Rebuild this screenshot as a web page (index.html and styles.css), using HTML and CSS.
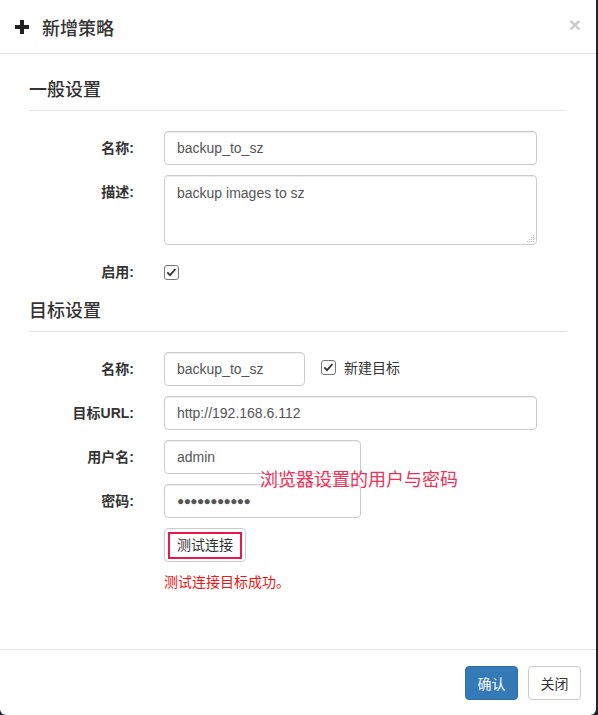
FILE: index.html
```html
<!DOCTYPE html>
<html>
<head>
    <title>新增策略</title>
    <link rel="stylesheet" href="styles.css">
</head>
<body>
    <div class="modal">
        <div class="modal-header">
            <h4 class="modal-title">
                <svg class="plus" width="16" height="16" viewBox="0 0 16 16"><path d="M8 1v14M1 8h14" stroke="#222" stroke-width="4"/></svg>
                新增策略
            </h4>
            <span class="close">&times;</span>
        </div>

        <div class="modal-body">
            <h3 class="section">一般设置</h3>
            <div class="form-row">
                <label>名称:</label>
                <div class="field"><div class="input">backup_to_sz</div></div>
            </div>
            <div class="form-row">
                <label>描述:</label>
                <div class="field">
                    <div class="input textarea">backup images to sz
                        <svg class="grip" width="8" height="8" viewBox="0 0 8 8"><g fill="#bbb"><rect x="6" y="0" width="1" height="1"/><rect x="4" y="2" width="1" height="1"/><rect x="6" y="2" width="1" height="1"/><rect x="2" y="4" width="1" height="1"/><rect x="4" y="4" width="1" height="1"/><rect x="6" y="4" width="1" height="1"/><rect x="0" y="6" width="1" height="1"/><rect x="2" y="6" width="1" height="1"/><rect x="4" y="6" width="1" height="1"/><rect x="6" y="6" width="1" height="1"/></g></svg>
                    </div>
                </div>
            </div>
            <div class="form-row">
                <label>启用:</label>
                <div class="field check-field">
                    <svg class="checkbox" width="15" height="15" viewBox="0 0 15 15"><rect x="0.5" y="0.5" width="14" height="14" rx="2.5" fill="#fff" stroke="#777"/><path d="M3.3 7.4l2.7 2.8 5.5-6.2" fill="none" stroke="#333" stroke-width="1.8"/></svg>
                </div>
            </div>

            <h3 class="section section-second">目标设置</h3>
            <div class="form-row">
                <label>名称:</label>
                <div class="field inline">
                    <div class="input short">backup_to_sz</div>
                    <span class="check-label">
                        <svg class="checkbox" width="15" height="15" viewBox="0 0 15 15"><rect x="0.5" y="0.5" width="14" height="14" rx="2.5" fill="#fff" stroke="#777"/><path d="M3.3 7.4l2.7 2.8 5.5-6.2" fill="none" stroke="#333" stroke-width="1.8"/></svg>
                        新建目标
                    </span>
                </div>
            </div>
            <div class="form-row">
                <label>目标URL:</label>
                <div class="field"><div class="input">http://192.168.6.112</div></div>
            </div>
            <div class="form-row">
                <label>用户名:</label>
                <div class="field"><div class="input medium">admin</div></div>
            </div>
            <div class="form-row">
                <label>密码:</label>
                <div class="field"><div class="input medium dots">●●●●●●●●●●●</div></div>
            </div>
            <div class="form-row">
                <label></label>
                <div class="field"><button class="btn test-btn"><span>测试连接</span></button></div>
            </div>
            <div class="form-row result-row">
                <label></label>
                <div class="field"><span class="success">测试连接目标成功。</span></div>
            </div>

            <div class="annotation">浏览器设置的用户与密码</div>
        </div>

        <div class="modal-footer">
            <button class="btn btn-primary">确认</button>
            <button class="btn">关闭</button>
        </div>
    </div>
</body>
</html>
```

FILE: styles.css
```css
html, body {
    margin: 0;
    height: 100%;
}
body {
    background: #1c262c;
    font-family: "Liberation Sans", "Noto Sans CJK SC", sans-serif;
    font-size: 14px;
    color: #333;
}
.modal {
    width: 596px;
    height: 715px;
    background: #fff;
    border-radius: 0 0 6px 6px;
    display: flex;
    flex-direction: column;
}
.modal-header {
    height: 53px;
    border-bottom: 1px solid #e5e5e5;
    display: flex;
    align-items: center;
    justify-content: space-between;
    padding: 0 15px 0 14px;
}
.modal-title {
    margin: 0;
    font-size: 18px;
    font-weight: 500;
    display: flex;
    align-items: center;
    gap: 12px;
    color: #333;
}
.plus {
    display: block;
}
.close {
    font-size: 21px;
    font-weight: bold;
    color: #000;
    opacity: 0.2;
    line-height: 1;
    margin-top: -4px;
}
.modal-body {
    position: relative;
    flex: 1;
    padding: 0 29px;
}
.section {
    margin: 26px 0 20px;
    padding-bottom: 10px;
    border-bottom: 1px solid #e5e5e5;
    font-size: 18px;
    font-weight: 500;
    line-height: 20px;
    color: #333;
}
.section-second {
    margin-top: 12px;
}
.form-row {
    display: grid;
    grid-template-columns: 105px 1fr;
    column-gap: 30px;
    margin-bottom: 10px;
    min-height: 34px;
}
.form-row label {
    text-align: right;
    font-weight: bold;
    line-height: 34px;
}
.field {
    display: flex;
    align-items: flex-start;
}
.check-field {
    align-items: center;
}
.input {
    box-sizing: border-box;
    width: 373px;
    height: 34px;
    padding: 0 12px;
    line-height: 32px;
    border: 1px solid #ccc;
    border-radius: 4px;
    color: #555;
    box-shadow: inset 0 1px 1px rgba(0, 0, 0, 0.075);
}
.textarea {
    position: relative;
    height: 70px;
    line-height: 20px;
    padding-top: 7px;
}
.grip {
    position: absolute;
    right: 1px;
    bottom: 1px;
}
.short {
    width: 141px;
}
.medium {
    width: 197px;
}
.dots {
    font-size: 12px;
    letter-spacing: -0.6px;
    color: #555;
}
.inline {
    align-items: center;
    gap: 16px;
}
.check-label {
    display: flex;
    align-items: center;
    gap: 8px;
    margin-top: -4px;
}
.checkbox {
    display: block;
}
.btn {
    font-family: inherit;
    font-size: 14px;
    height: 34px;
    padding: 0 12px;
    border: 1px solid #ccc;
    border-radius: 4px;
    background: #fff;
    color: #333;
}
.btn-primary {
    background: #337ab7;
    border-color: #2e6da4;
    color: #fff;
}
.modal-footer .btn {
    width: 53px;
    padding: 0;
}
.test-btn {
    padding: 0 3px;
}
.test-btn span {
    display: block;
    border: 2px solid #e8194a;
    padding: 0 7px;
    line-height: 23px;
}
.result-row {
    min-height: 20px;
}
.result-row label {
    line-height: 20px;
}
.success {
    color: #f01414;
    line-height: 20px;
}
.annotation {
    position: absolute;
    left: 260px;
    top: 411px;
    color: #f0325a;
    font-size: 18px;
}
.modal-footer {
    border-top: 1px solid #e5e5e5;
    padding: 16px 15px 15px;
    display: flex;
    justify-content: flex-end;
    gap: 10px;
}
```
